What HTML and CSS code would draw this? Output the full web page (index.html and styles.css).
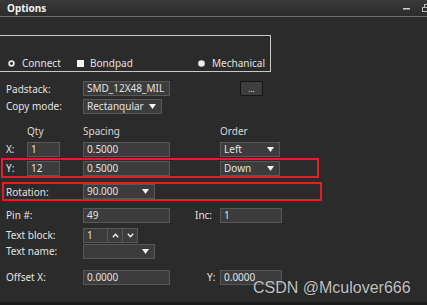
FILE: index.html
```html
<!DOCTYPE html>
<html lang="en">
<head>
    <meta charset="UTF-8">
    <title>Options</title>
<link rel="stylesheet" href="styles.css">
</head>
<body>

<div class="titlebar">
    <span class="title">Options</span>
    <span class="winbtns">
        <svg width="8" height="4" viewBox="0 0 8 4"><rect x="0" y="2" width="7" height="1.5" fill="#d0d0d0"/></svg>
        <svg width="7" height="8" viewBox="0 0 7 8"><rect x="2.5" y="0.5" width="5" height="4" fill="none" stroke="#bbb"/><rect x="0.5" y="3.5" width="5" height="4" fill="#2f2f2f" stroke="#bbb"/></svg>
    </span>
</div>

<main class="panel">
    <div class="groupbox">
        <div class="radios">
            <label class="opt opt-connect">
                <svg width="7" height="7" viewBox="0 0 7 7"><circle cx="3.5" cy="3.5" r="3.2" fill="#e6e6e6"/><circle cx="3.5" cy="3.5" r="1.4" fill="#222"/></svg>
                Connect
            </label>
            <label class="opt opt-bondpad">
                <svg width="7" height="7" viewBox="0 0 7 7"><rect x="0" y="0" width="7" height="7" fill="#f2f2f2"/></svg>
                Bondpad
            </label>
            <label class="opt opt-mech">
                <svg width="7" height="7" viewBox="0 0 7 7"><circle cx="3.5" cy="3.5" r="3.3" fill="#ececec"/></svg>
                Mechanical
            </label>
        </div>
    </div>

    <div class="row r-padstack">
        <span class="lbl">Padstack:</span>
        <div class="field w87">SMD_12X48_MIL</div>
        <div class="btn">...</div>
    </div>

    <div class="row r-copy">
        <span class="lbl">Copy mode:</span>
        <div class="field select w79">Rectanqular <svg width="7" height="5" viewBox="0 0 7 5"><polygon points="0,0 7,0 3.5,5" fill="#f4f4f4"/></svg></div>
    </div>

    <div class="row r-head">
        <span class="c-axis"></span>
        <span class="c-qty hdr">Qty</span>
        <span class="c-spacing hdr">Spacing</span>
        <span class="c-order hdr">Order</span>
    </div>

    <div class="row r-x">
        <span class="c-axis">X:</span>
        <div class="field c-qty">1</div>
        <div class="field c-spacing">0.5000</div>
        <div class="field select c-order">Left <svg width="7" height="5" viewBox="0 0 7 5"><polygon points="0,0 7,0 3.5,5" fill="#f4f4f4"/></svg></div>
    </div>

    <div class="row marked r-y">
        <span class="c-axis">Y:</span>
        <div class="field c-qty">12</div>
        <div class="field c-spacing">0.5000</div>
        <div class="field select c-order">Down <svg width="7" height="5" viewBox="0 0 7 5"><polygon points="0,0 7,0 3.5,5" fill="#f4f4f4"/></svg></div>
    </div>

    <div class="row marked r-rot">
        <span class="lbl">Rotation:</span>
        <div class="field select w72">90.000 <svg width="7" height="5" viewBox="0 0 7 5"><polygon points="0,0 7,0 3.5,5" fill="#f4f4f4"/></svg></div>
    </div>

    <div class="row r-pin">
        <span class="lbl">Pin #:</span>
        <div class="field w87">49</div>
        <span class="side-lbl">Inc:</span>
        <div class="field w62">1</div>
    </div>

    <div class="row r-block">
        <span class="lbl">Text block:</span>
        <div class="field w25">1</div>
        <div class="spin"><svg width="7" height="5" viewBox="0 0 7 5"><polyline points="0.8,4.2 3.5,1.2 6.2,4.2" fill="none" stroke="#eee" stroke-width="1.4"/></svg></div>
        <div class="spin"><svg width="7" height="5" viewBox="0 0 7 5"><polyline points="0.8,0.8 3.5,3.8 6.2,0.8" fill="none" stroke="#eee" stroke-width="1.4"/></svg></div>
    </div>

    <div class="row r-name">
        <span class="lbl">Text name:</span>
        <div class="field select w72"><span></span><svg width="7" height="5" viewBox="0 0 7 5"><polygon points="0,0 7,0 3.5,5" fill="#f4f4f4"/></svg></div>
    </div>

    <div class="row r-offset">
        <span class="lbl">Offset X:</span>
        <div class="field w87">0.0000</div>
        <span class="side-lbl side-y">Y:</span>
        <div class="field w62">0.0000</div>
    </div>
</main>

<div class="footer"></div>
<div class="watermark">CSDN @Mculover666</div>

</body>
</html>
```

FILE: styles.css
```css
body{
    margin: 0;
    width: 427px;
    height: 305px;
    overflow: hidden;
    position: relative;
    display: flex;
    flex-direction: column;
    background-color: rgb(43, 43, 43);
    color: rgb(226, 226, 226);
    font-family: "Noto Sans", "Open Sans", sans-serif;
    font-size: 10px;
}
.titlebar{
    height: 16px;
    flex: none;
    display: flex;
    align-items: center;
    justify-content: space-between;
    background: linear-gradient(rgb(58, 58, 58), rgb(44, 44, 44));
    border-bottom: 1px solid rgb(110, 110, 110);
}
.title{
    font-weight: bold;
    color: rgb(240, 240, 240);
    padding-left: 7px;
}
.winbtns{
    display: flex;
    align-items: center;
    gap: 11px;
    margin-right: -2px;
}
.panel{
    flex: 1;
}
.groupbox{
    margin-top: 18px;
    margin-left: -10px;
    width: 281px;
    height: 37px;
    box-sizing: border-box;
    border: 1px solid rgb(200, 200, 200);
}
.radios{
    display: flex;
    align-items: center;
    height: 14px;
    margin-top: 20px;
    padding-left: 17px;
}
.opt{
    display: flex;
    align-items: center;
    gap: 7px;
}
.opt-connect{ width: 69px; }
.opt-bondpad{ width: 121px; gap: 6px; }
.opt-mech{ gap: 7px; }

.row{
    display: flex;
    align-items: center;
    height: 16px;
    padding-left: 6px;
}
.lbl{
    width: 77px;
    flex: none;
}
.field{
    height: 15px;
    box-sizing: border-box;
    border: 1px solid rgb(88, 88, 88);
    background-color: rgb(60, 60, 60);
    padding: 0 3px;
    line-height: 13px;
    white-space: nowrap;
    overflow: hidden;
    flex: none;
}
.select{
    display: flex;
    align-items: center;
    justify-content: space-between;
    padding-right: 5px;
}
.w87{ width: 87px; }
.w79{ width: 79px; }
.w72{ width: 72px; }
.w62{ width: 62px; }
.w25{ width: 25px; }

.btn{
    width: 23px;
    height: 15px;
    margin-left: 70px;
    box-sizing: border-box;
    border: 1px solid rgb(20, 20, 20);
    border-radius: 2px;
    background-color: rgb(62, 62, 62);
    font-size: 8px;
    line-height: 14px;
    text-align: center;
    color: rgb(230, 230, 230);
}
.spin{
    width: 15px;
    height: 15px;
    box-sizing: border-box;
    border: 1px solid rgb(88, 88, 88);
    border-left: none;
    background-color: rgb(60, 60, 60);
    display: flex;
    align-items: center;
    justify-content: center;
}

.c-axis{ width: 21px; flex: none; }
.c-qty{ width: 33px; margin-right: 23px; }
.c-spacing{ width: 87px; margin-right: 50px; }
.c-order{ width: 60px; }
.hdr{ color: rgb(214, 214, 214); }

.side-lbl{
    margin-left: 25px;
    width: 25px;
}
.side-y{
    margin-left: 37px;
    width: 13px;
}

.marked{
    margin-left: 1px;
    padding-left: 3px;
    width: 318px;
    box-sizing: border-box;
    border: 2px solid rgb(228, 30, 36);
}

.r-padstack{ margin-top: 8px; height: 17px; }
.r-copy{ margin-top: 1px; }
.r-head{ margin-top: 10px; height: 14px; }
.r-x{ margin-top: 3px; }
.r-y{ margin-top: 1px; height: 20px; }
.r-rot{ margin-top: 4px; height: 19px; width: 320px; margin-left: 2px; padding-left: 2px; }
.r-pin{ margin-top: 6px; }
.r-block{ margin-top: 4px; }
.r-name{ margin-top: 0; }
.r-offset{ margin-top: 10px; }

.footer{
    height: 3px;
    flex: none;
    background-color: rgb(28, 28, 28);
}
.watermark{
    position: absolute;
    left: 253px;
    top: 279px;
    font-family: "Liberation Sans", Arial, sans-serif;
    font-size: 16px;
    line-height: 18px;
    color: rgba(226, 226, 226, 0.85);
    text-shadow: 0 0 1px rgba(0, 0, 0, 0.6);
}
```
